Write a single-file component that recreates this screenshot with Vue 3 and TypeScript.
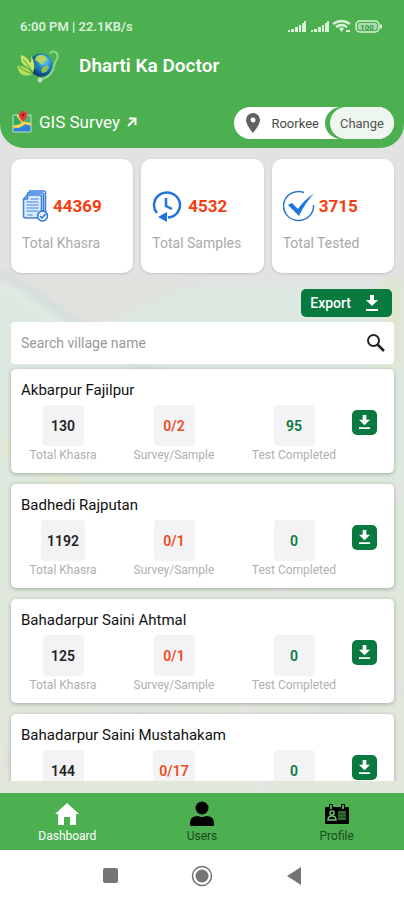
<script setup lang="ts">
import { ref, computed } from 'vue'

interface Stat {
  icon: 'records' | 'history' | 'tested'
  value: number
  label: string
}

interface Village {
  name: string
  khasra: number
  survey: string
  completed: number
}

const stats: Stat[] = [
  { icon: 'records', value: 44369, label: 'Total Khasra' },
  { icon: 'history', value: 4532, label: 'Total Samples' },
  { icon: 'tested', value: 3715, label: 'Total Tested' },
]

const villages: Village[] = [
  { name: 'Akbarpur Fajilpur', khasra: 130, survey: '0/2', completed: 95 },
  { name: 'Badhedi Rajputan', khasra: 1192, survey: '0/1', completed: 0 },
  { name: 'Bahadarpur Saini Ahtmal', khasra: 125, survey: '0/1', completed: 0 },
  { name: 'Bahadarpur Saini Mustahakam', khasra: 144, survey: '0/17', completed: 0 },
]

const query = ref('')
const shown = computed(() =>
  villages.filter((v) => v.name.toLowerCase().includes(query.value.trim().toLowerCase())),
)
</script>

<template>
  <div class="app">
    <svg class="terrain" viewBox="0 0 404 645" preserveAspectRatio="none" aria-hidden="true">
      <path d="M0 130Q40 140 90 180L200 132H0z" fill="#e1e1de" />
      <path d="M380 130h24v90h-24z" fill="#dfe7d3" />
      <g fill="none">
        <path d="M-10 120 Q30 138 80 180 T230 250" stroke="#d3dddd" stroke-width="8" />
        <path d="M-10 134 Q26 146 66 190" stroke="#eaeee9" stroke-width="3" />
        <path d="M0 296 Q60 330 110 360 T250 420" stroke="#e2e8d2" stroke-width="14" />
        <path d="M404 340 Q340 390 280 440 T260 645" stroke="#e4e6e3" stroke-width="12" />
        <path d="M0 620 Q80 550 180 570 T404 540" stroke="#dfe2e0" stroke-width="10" />
      </g>
    </svg>

    <header class="header">
      <div class="status">
        <span>6:00 PM | 22.1KB/s</span>
        <svg class="status-icons" viewBox="0 0 96 14" aria-hidden="true">
          <g fill="#d9f2da">
            <path d="M1 11h2v2H1zM4 10h3v3H4zM8 8h3v5H8zM12 6h2v7h-2zM15 4h2v9h-2zM17 2h2v11h-2z" />
            <path d="M24 11h2v2h-2zM27 10h3v3h-3zM31 8h3v5h-3zM35 6h2v7h-2zM38 4h2v9h-2zM40 2h2v11h-2z" />
            <path d="M52 9.500a3.500 3.500 0 0 1 5 0L54.500 13z" />
            <path d="M59 11h4v2h-4z" />
          </g>
          <g fill="none" stroke="#d9f2da" stroke-width="2.500">
            <path d="M46 5q8.500-6 17 0" />
            <path d="M49 8q5.500-4 11 0" />
            <rect x="69" y="2" width="23" height="11" rx="4" stroke-width="1.500" />
          </g>
          <rect x="71" y="4" width="19" height="7" rx="2" fill="#a9dcab" />
          <path d="M93 5.500h2v4h-2z" fill="#d9f2da" />
          <text x="80" y="11" text-anchor="middle" class="battery">100</text>
        </svg>
      </div>

      <div class="brand">
        <svg class="logo" viewBox="0 0 44 34" aria-hidden="true">
          <defs>
            <radialGradient id="globe" cx="0.65" cy="0.35" r="0.7">
              <stop offset="0" stop-color="#6fd0f2" />
              <stop offset="0.45" stop-color="#1e86cc" />
              <stop offset="1" stop-color="#0b3267" />
            </radialGradient>
          </defs>
          <path d="M34 5q2-4 5-2 4 2 2 7-2 3-3 7-2 9-9 12l-6 2" fill="none" stroke="#90d493" stroke-width="2" />
          <circle cx="25" cy="16" r="11.500" fill="url(#globe)" />
          <path d="M20 8q4-4 9-1l3 4-4 1-2 4-4-3-3-2z" fill="#b5d35f" />
          <path d="M27 18l5-2 1 3-3 4-4 1-1-3z" fill="#8cc453" />
          <path d="M15 13l4 2 1 5-4-1z" fill="#3f9561" />
          <path d="M17 24Q14 19 8 16 4 13 5 6q7 2 9 8 2-4 1-7 5 6 2 17z" fill="#c5e765" />
          <path d="M17 25q-7 3-12 0-3-3-4-8 9-1 16 8z" fill="#b3df5f" />
          <path d="M17 25Q9 23 3 18M17 24Q12 15 7 10" fill="none" stroke="#5f9d31" stroke-width="1" />
          <circle cx="24" cy="31" r="2.500" fill="#b6e0b8" />
        </svg>
        <h1>Dharti Ka Doctor</h1>
      </div>

      <div class="location-row">
        <a href="#gis" class="gis">
          <svg class="map" viewBox="0 0 20 22" aria-hidden="true">
            <path d="M1 4h18v17H1z" fill="#f5c945" />
            <path d="M1 4h5l5 7-10 6z" fill="#3aa860" />
            <path d="M14 4h5v10l-7-3z" fill="#4cb96a" />
            <path d="M1 17q8 1 12-4l6 2v6H1z" fill="#2f7fdc" />
            <path d="M1 15q7 1 12-3l6 1M5 4l6 8" fill="none" stroke="#f7d95a" stroke-width="2" />
            <path d="M1 4h18v17H1z" fill="none" stroke="#bfe0c4" stroke-width="1" />
            <path d="M11 11Q6 6 7 3q1-3 4-3t4 3q1 3-4 8z" fill="#df3f38" />
            <circle cx="11" cy="4" r="1.500" fill="#8d1e20" />
          </svg>
          <span>GIS Survey</span>
          <svg class="arrow" viewBox="0 0 10 10" aria-hidden="true">
            <path d="M1 9l7-7M2 1.500h6.500V8" fill="none" stroke="#fff" stroke-width="2" />
          </svg>
        </a>
        <div class="place">
          <svg class="pin" viewBox="0 0 14 20" aria-hidden="true">
            <path d="M7 0a7 7 0 0 0-7 7c0 5 7 13 7 13s7-8 7-13a7 7 0 0 0-7-7zm0 4.500a2.500 2.500 0 1 1 0 5 2.500 2.500 0 0 1 0-5z" fill="#626262" fill-rule="evenodd" />
          </svg>
          <span class="place-name">Roorkee</span>
          <button type="button" class="change">Change</button>
        </div>
      </div>
    </header>

    <main class="main">
      <section class="stats">
        <article v-for="s in stats" :key="s.label" class="stat">
          <div class="stat-top">
            <svg v-if="s.icon === 'records'" class="stat-icon narrow" viewBox="0 0 26 32" aria-hidden="true">
              <g fill="#dce9fc" stroke="#3f83e0" stroke-width="1.500" stroke-linejoin="round">
                <path d="M7 1h14q2 0 2 2v20H7z" />
                <path d="M5 3h14q2 0 2 2v21H5z" />
                <path d="M5 5h12q2 0 2 2v21H3q-2 0-2-2V9z" />
                <path d="M5 5v4H1" fill="none" />
              </g>
              <path d="M4 12h12M4 15h12M4 18h12M4 21h12M5 25h5M8 9h8" stroke="#3f83e0" stroke-width="1" />
              <circle cx="20" cy="26" r="5" fill="#eaf2ff" stroke="#2776df" stroke-width="1.500" />
              <path d="M17.500 26l2 2 3.500-4" fill="none" stroke="#2776df" stroke-width="1.500" />
            </svg>
            <svg v-else-if="s.icon === 'history'" class="stat-icon" viewBox="0 0 32 32" aria-hidden="true">
              <path d="M5 23A13 12.500 0 1 1 16 27.500" fill="none" stroke="#1f74dd" stroke-width="2.500" />
              <path d="M14 8v8l6 3" fill="none" stroke="#1f74dd" stroke-width="2.500" />
              <path d="M6 27l9-5v10z" fill="#1f74dd" />
            </svg>
            <svg v-else class="stat-icon" viewBox="0 0 32 32" aria-hidden="true">
              <path d="M21 2.500A15 14.500 0 1 0 30.500 15" fill="none" stroke="#2b77d8" stroke-width="1.500" />
              <path d="M5 15l4-2 6 6Q21 10 31 3.500 22 13 16 26z" fill="#1f74dd" />
            </svg>
            <strong>{{ s.value }}</strong>
          </div>
          <p>{{ s.label }}</p>
        </article>
      </section>

      <div class="toolbar">
        <button type="button" class="export">
          <span>Export</span>
          <svg viewBox="0 0 14 16" aria-hidden="true">
            <path d="M5 0h4v5h4l-6 6-6-6h4zM1 14h12v2H1z" fill="#fff" />
          </svg>
        </button>
      </div>

      <label class="search">
        <input v-model="query" type="text" placeholder="Search village name" aria-label="Search village name" />
        <svg viewBox="0 0 20 20" aria-hidden="true">
          <circle cx="7.500" cy="7.500" r="5.500" fill="none" stroke="#222" stroke-width="2" />
          <path d="M11.500 11.500l6.500 6.500" stroke="#222" stroke-width="2.500" />
        </svg>
      </label>

      <div class="list">
        <article v-for="v in shown" :key="v.name" class="card">
          <h2>{{ v.name }}</h2>
          <div class="metrics">
            <div class="metric">
              <span class="box">{{ v.khasra }}</span>
              <span class="caption">Total Khasra</span>
            </div>
            <div class="metric">
              <span class="box orange">{{ v.survey }}</span>
              <span class="caption">Survey/Sample</span>
            </div>
            <div class="metric">
              <span class="box green">{{ v.completed }}</span>
              <span class="caption">Test Completed</span>
            </div>
            <button type="button" class="download" :aria-label="`Download ${v.name}`">
              <svg viewBox="0 0 14 16" aria-hidden="true">
                <path d="M5 0h4v5h4l-6 6-6-6h4zM1 13h12v2H1z" fill="#fff" />
              </svg>
            </button>
          </div>
        </article>
      </div>
    </main>

    <nav class="tabs">
      <a href="#dashboard" class="tab active">
        <svg viewBox="0 0 26 26" aria-hidden="true">
          <path d="M13 2l12 11h-3v11h-6v-8h-6v8H4V13H1z" fill="#fff" />
        </svg>
        <span>Dashboard</span>
      </a>
      <a href="#users" class="tab">
        <svg viewBox="0 0 26 26" aria-hidden="true">
          <circle cx="13" cy="7" r="6.500" />
          <path d="M1 24v-2q0-7 8-7 4 2 8 0 8 0 8 7v2q0 1-1 1H2q-1 0-1-1z" />
        </svg>
        <span>Users</span>
      </a>
      <a href="#profile" class="tab">
        <svg viewBox="0 0 26 26" aria-hidden="true">
          <path d="M2 6h3V3h4v3h8V3h4v3h3q1 0 1 1v15q0 1-1 1H2q-1 0-1-1V7q0-1 1-1z" />
          <path d="M6 4h2v4H6zM18 4h2v4h-2z" fill="#4caf50" />
          <path d="M14 10h8v9h-8z" fill="#2e6b31" />
          <path d="M14 13h8M14 16h8" stroke="#1c421e" stroke-width="1" />
          <circle cx="8" cy="12" r="2" fill="none" stroke="#6cc470" stroke-width="1.500" />
          <path d="M4 19q0-4 4-4t4 4z" fill="none" stroke="#6cc470" stroke-width="1.500" />
        </svg>
        <span>Profile</span>
      </a>
    </nav>

    <div class="system">
      <button type="button" aria-label="Recent apps">
        <svg viewBox="0 0 24 24" aria-hidden="true"><rect x="5" y="5" width="15" height="15" rx="2" fill="#757575" /></svg>
      </button>
      <button type="button" aria-label="Home">
        <svg viewBox="0 0 24 24" aria-hidden="true">
          <circle cx="12" cy="13" r="9.500" fill="none" stroke="#757575" stroke-width="1.500" />
          <circle cx="12" cy="13" r="6.500" fill="#757575" />
        </svg>
      </button>
      <button type="button" aria-label="Back">
        <svg viewBox="0 0 24 24" aria-hidden="true"><path d="M19 4v18L5 13z" fill="#757575" /></svg>
      </button>
    </div>
  </div>
</template>

<style>
body {
  margin: 0;
}
</style>

<style scoped>
* {
  box-sizing: border-box;
}

.app {
  position: relative;
  display: flex;
  flex-direction: column;
  height: 100vh;
  overflow: hidden;
  font-family: Roboto, "Liberation Sans", sans-serif;
  background: linear-gradient(to bottom, #e2e2e3 0, #e2e2e3 278px, #dce8e0 290px, #dde8dd 55%, #e2e7db 85%);
}

.terrain {
  position: absolute;
  top: 148px;
  left: 0;
  width: 100%;
  height: 645px;
  filter: blur(3px);
}

button {
  padding: 0;
  border: 0;
  font: inherit;
  cursor: pointer;
}

a {
  color: inherit;
  text-decoration: none;
}

svg {
  flex: none;
  display: block;
}

h1,
h2,
p {
  margin: 0;
}

.header {
  position: relative;
  display: flex;
  flex-direction: column;
  padding: 16px 10px 9px;
  color: #fff;
  background: #4caf50;
  border-radius: 0 0 24px 24px;
}

.status {
  display: flex;
  align-items: center;
  justify-content: space-between;
  height: 20px;
  padding: 0 11px 0 10px;
  font-size: 13px;
  font-weight: 600;
  color: #d9f2da;
}

.status-icons {
  width: 96px;
  height: 14px;
}

.battery {
  font-size: 8px;
  font-weight: 700;
  fill: #3c9a40;
}

.brand {
  display: flex;
  align-items: center;
  gap: 19px;
  height: 60px;
  padding-left: 6px;
}

.logo {
  width: 44px;
  height: 34px;
}

h1 {
  font-size: 19px;
  font-weight: 600;
  line-height: 24px;
}

.location-row {
  display: flex;
  align-items: center;
  justify-content: space-between;
  padding-top: 11px;
}

.gis {
  display: flex;
  align-items: center;
  gap: 7px;
  padding: 0 0 3px 2px;
  font-size: 17px;
  line-height: 20px;
}

.map {
  width: 20px;
  height: 22px;
}

.arrow {
  width: 10px;
  height: 10px;
}

.place {
  display: flex;
  align-items: center;
  height: 32px;
  padding-left: 12px;
  color: #4b4b4b;
  font-size: 13px;
  background: #fff;
  border-radius: 16px;
}

.pin {
  width: 14px;
  height: 20px;
}

.place-name {
  padding: 0 11px;
}

.change {
  height: 32px;
  padding: 0 10px;
  color: #555;
  background: #eef7ef;
  border-radius: 16px;
  box-shadow: -5px 0 0 #4caf50;
}

.main {
  position: relative;
  display: flex;
  flex: 1;
  flex-direction: column;
  min-height: 0;
  padding: 11px 10px 12px 11px;
}

.stats {
  display: grid;
  grid-template-columns: repeat(3, 1fr);
  gap: 8px;
}

.stat {
  display: flex;
  flex-direction: column;
  gap: 11px;
  height: 114px;
  padding: 31px 11px 0;
  background: #fff;
  border-radius: 10px;
  box-shadow: 0 1px 3px #0002;
}

.stat-top {
  display: flex;
  align-items: center;
  gap: 4px;
  height: 32px;
}

.stat-icon {
  width: 32px;
  height: 32px;
}

.stat-icon.narrow {
  width: 27px;
}

.stat strong {
  font-size: 17px;
  color: #f63d12;
}

.stat p {
  font-size: 14px;
  line-height: 20px;
  color: #a9a9a9;
  white-space: nowrap;
}

.toolbar {
  display: flex;
  justify-content: flex-end;
  padding: 16px 2px 5px;
}

.export {
  display: flex;
  align-items: center;
  gap: 14px;
  height: 28px;
  padding: 0 13px 0 9px;
  color: #fff;
  font-size: 14px;
  font-weight: 500;
  background: #087a40;
  border-radius: 5px;
}

.export svg {
  width: 14px;
  height: 16px;
}

.search {
  display: flex;
  flex: none;
  align-items: center;
  height: 42px;
  padding: 0 8px 0 10px;
  background: #fff;
  border-radius: 4px;
}

.search input {
  flex: 1;
  min-width: 0;
  padding: 0;
  border: 0;
  outline: 0;
  font: inherit;
  font-size: 14px;
  color: #222;
  background: transparent;
}

.search input::placeholder {
  color: #999;
  opacity: 1;
}

.search svg {
  width: 20px;
  height: 20px;
}

.list {
  display: flex;
  flex: 1;
  flex-direction: column;
  gap: 11px;
  min-height: 0;
  margin: 0 -10px 0 -11px;
  padding: 5px 10px 0 11px;
  overflow-y: auto;
  scrollbar-width: none;
}

.card {
  flex: none;
  height: 104px;
  padding: 11px 10px 0;
  background: #fff;
  border-radius: 5px;
  box-shadow: 0 1px 4px #0004;
}

h2 {
  font-size: 15px;
  font-weight: 400;
  line-height: 20px;
  color: #111;
}

.metrics {
  display: grid;
  grid-template-columns: 84fr 138fr 102fr 39px;
  padding-top: 5px;
}

.metric {
  display: flex;
  flex-direction: column;
  align-items: center;
}

.box {
  display: flex;
  align-items: center;
  justify-content: center;
  min-width: 41px;
  height: 41px;
  padding: 0 6px;
  font-size: 14px;
  font-weight: 600;
  color: #222;
  background: #f3f3f5;
  border-radius: 4px;
}

.orange {
  color: #f04a22;
}

.green {
  color: #087a40;
}

.caption {
  font-size: 12px;
  line-height: 18px;
  color: #b0b0b0;
  white-space: nowrap;
}

.download {
  display: flex;
  align-items: center;
  justify-content: center;
  justify-self: center;
  width: 25px;
  height: 25px;
  margin-top: 5px;
  background: #087a40;
  border-radius: 5px;
}

.download svg {
  width: 13px;
  height: 15px;
}

.tabs {
  position: relative;
  display: grid;
  grid-template-columns: repeat(3, 1fr);
  height: 57px;
  background: #4caf50;
}

.tab {
  display: flex;
  flex-direction: column;
  align-items: center;
  padding-top: 8px;
  font-size: 12px;
  line-height: 18px;
  color: #1d4a1f;
}

.tab.active {
  color: #fff;
}

.tab svg {
  width: 26px;
  height: 26px;
}

.system {
  position: relative;
  display: flex;
  align-items: center;
  justify-content: center;
  gap: 68px;
  height: 50px;
  background: #fff;
}

.system button {
  background: none;
}

.system svg {
  width: 24px;
  height: 24px;
}
</style>
